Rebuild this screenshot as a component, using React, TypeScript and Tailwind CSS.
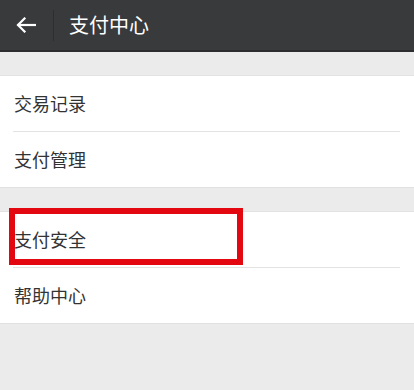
const font = { fontFamily: '"Noto Sans CJK SC", "Noto Sans", sans-serif' };

function Row({ label, divider, highlight }: { label: string; divider?: boolean; highlight?: boolean }) {
  return (
    <div className="relative">
      <div className="flex h-[55px] items-center pl-[14px] text-[18px] text-[#333333]">{label}</div>
      {divider ? <div className="ml-[13px] mr-[14px] h-px bg-[#e3e3e3]" /> : null}
      {highlight ? (
        <div className="pointer-events-none absolute left-[9px] top-[-4px] h-[57px] w-[234px] border-[6px] border-[#e3080f]" />
      ) : null}
    </div>
  );
}

export default function App() {
  return (
    <div className="min-h-[390px] w-[414px] bg-[#ebebeb]" style={font}>
      <header className="flex h-[52px] items-center border-b-2 border-[#2b2d2f] bg-[#393a3c] text-white">
        <div className="flex w-[53px] items-center justify-center pr-[2px]">
          <svg width="20" height="16" viewBox="0 0 20 16" fill="none" stroke="currentColor" strokeWidth="2.2" strokeLinecap="square">
            <path d="M19 8H2.5" />
            <path d="M8.5 1.5L2 8l6.5 6.5" />
          </svg>
        </div>
        <div className="h-[31px] w-px bg-[#2c2e30]" />
        <h1 className="pl-[15px] text-[20px] leading-none">支付中心</h1>
      </header>

      <div className="h-[23px]" />
      <section className="border-y border-[#e2e2e2] bg-white">
        <Row label="交易记录" divider />
        <Row label="支付管理" />
      </section>

      <div className="h-[23px]" />
      <section className="border-y border-[#e2e2e2] bg-white">
        <Row label="支付安全" divider highlight />
        <Row label="帮助中心" />
      </section>
    </div>
  );
}
